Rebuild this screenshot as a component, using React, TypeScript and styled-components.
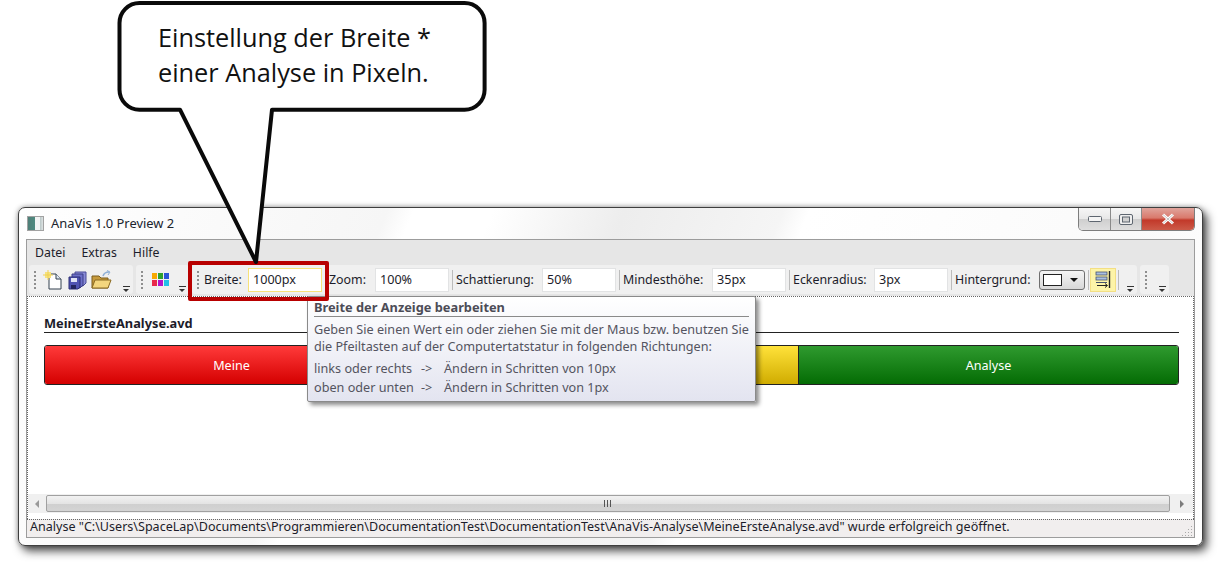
import React from "react";
import styled, { createGlobalStyle } from "styled-components";

const GlobalStyle = createGlobalStyle`
  html, body {
    margin: 0;
    padding: 0;
    background: #ffffff;
  }
  body {
    font-family: "Noto Sans", "Open Sans", sans-serif;
    font-size: 12.6px;
    color: #1c1c2a;
    overflow: hidden;
  }
`;

const Page = styled.div`
  position: relative;
  width: 1221px;
  height: 571px;
  padding: 207px 18px 0;
  box-sizing: border-box;
  overflow: hidden;
`;

const Window = styled.div`
  width: 1185px;
  height: 339px;
  box-sizing: border-box;
  border: 1px solid #3f3f3f;
  border-radius: 7px;
  padding: 0 7px 7px;
  display: flex;
  flex-direction: column;
  box-shadow: 4px 5px 10px rgba(0, 0, 0, 0.7), 0 0 5px rgba(0, 0, 0, 0.35);
  background: linear-gradient(
    112deg,
    #ffffff 0,
    #f6f6f6 28%,
    #ffffff 30%,
    #ffffff 36%,
    #ededed 46%,
    #f5f5f5 58%,
    #ffffff 60%,
    #fafafa 85%,
    #ffffff 100%
  );
`;

const TitleBar = styled.div`
  height: 31px;
  display: flex;
  align-items: flex-start;
  flex-shrink: 0;
`;

const TitleText = styled.span`
  margin: 7px 0 0 7px;
  font-size: 12.9px;
  line-height: 16px;
  color: #20242e;
`;

const AppIcon = styled.div`
  width: 17px;
  height: 15px;
  margin: 8px 0 0 1px;
  border: 1px solid #a2a2a2;
  box-sizing: border-box;
  background: linear-gradient(90deg, #4f7f78 0, #4f8a80 45%, #f2f4f4 50%, #f2f4f4 78%, #b9c6c6 80%, #dfe4e4 100%);
`;

const Controls = styled.div`
  margin-left: auto;
  display: flex;
  height: 22px;
  border: 1px solid #7d7d7d;
  border-top: 0;
  border-radius: 0 0 5px 5px;
  overflow: hidden;
`;

const ControlButton = styled.div<{ $w: number; $close?: boolean }>`
  width: ${(p) => p.$w}px;
  display: flex;
  align-items: center;
  justify-content: center;
  border-left: 1px solid #8a8a8a;
  background: ${(p) =>
    p.$close
      ? "linear-gradient(#e0a49c 0, #d9796c 45%, #c2392a 55%, #cc5a48 100%)"
      : "linear-gradient(#f6f6f6 0, #e8e8e8 48%, #cfcfcf 52%, #dedede 100%)"};
  &:first-child {
    border-left: 0;
  }
`;

const Client = styled.div`
  flex: 1;
  display: flex;
  flex-direction: column;
  border: 1px solid #9c9c9c;
  background: #f0f0f0;
  min-height: 0;
`;

const MenuBar = styled.div`
  height: 25px;
  background: #e6e6e6;
  display: flex;
  align-items: center;
  gap: 16px;
  padding-left: 8px;
  flex-shrink: 0;
`;

const MenuItem = styled.span`
  font-size: 12.3px;
  line-height: 16px;
`;

const ToolRow = styled.div`
  height: 31px;
  background: #e6e6e6;
  display: flex;
  align-items: flex-start;
  padding: 0 0 0 2px;
  gap: 3px;
  flex-shrink: 0;
`;

const Band = styled.div<{ $w: number }>`
  position: relative;
  width: ${(p) => p.$w}px;
  height: 29px;
  background: #f0f0f0;
  border-radius: 3px;
  display: flex;
  align-items: center;
  flex-shrink: 0;
  box-sizing: border-box;
  padding-left: 5px;
`;

const Gripper = styled.div`
  width: 2px;
  height: 18px;
  margin-right: 5px;
  flex-shrink: 0;
  background: repeating-linear-gradient(#8e8e8e 0, #8e8e8e 2px, transparent 2px, transparent 4px);
`;

const OverflowArrow = styled.div`
  position: absolute;
  right: 3px;
  bottom: 2px;
  width: 7px;
  height: 6px;
  border-top: 1px solid #333;
  box-sizing: border-box;
  &::after {
    content: "";
    position: absolute;
    left: 0;
    top: 2px;
    border-left: 3.5px solid transparent;
    border-right: 3.5px solid transparent;
    border-top: 3.5px solid #333;
  }
`;

const ToolIcon = styled.svg`
  width: 22px;
  height: 22px;
  flex-shrink: 0;
  margin: 0 1px;
`;

const FieldLabel = styled.span<{ $w: number }>`
  width: ${(p) => p.$w}px;
  flex-shrink: 0;
  font-size: 12.4px;
  line-height: 16px;
  white-space: nowrap;
`;

const FieldInput = styled.div<{ $active?: boolean }>`
  width: 74px;
  height: 24px;
  box-sizing: border-box;
  background: #fff;
  border: 1px solid ${(p) => (p.$active ? "#f7e27a" : "#e2e3e4")};
  line-height: 22px;
  padding-left: 4px;
  font-size: 12.6px;
  flex-shrink: 0;
`;

const Sep = styled.div<{ $m?: string }>`
  width: 1px;
  height: 20px;
  margin: ${(p) => p.$m ?? "0 3px"};
  background: #bcbcbc;
  flex-shrink: 0;
`;

const Combo = styled.div`
  width: 46px;
  height: 20px;
  box-sizing: border-box;
  border: 1px solid #6f6f6f;
  border-radius: 3px;
  background: linear-gradient(#f4f4f4, #d8d8d8);
  display: flex;
  align-items: center;
  padding-left: 3px;
  gap: 8px;
  flex-shrink: 0;
`;

const Swatch = styled.div`
  width: 19px;
  height: 12px;
  box-sizing: border-box;
  border: 1px solid #222;
  background: #fff;
`;

const ComboArrow = styled.div`
  border-left: 4px solid transparent;
  border-right: 4px solid transparent;
  border-top: 4px solid #111;
`;

const ToggleButton = styled.div`
  width: 26px;
  height: 24px;
  box-sizing: border-box;
  border: 1px solid #f3df84;
  background: #fdf4a8;
  display: flex;
  align-items: center;
  justify-content: center;
  flex-shrink: 0;
`;

const DocArea = styled.div`
  flex: 1;
  min-height: 0;
  background: #fff;
  border: 1px dotted #666;
  border-bottom: 0;
  display: flex;
  flex-direction: column;
  box-sizing: border-box;
`;

const DocBody = styled.div`
  flex: 1;
  min-height: 0;
  padding: 18px 14px 0 16px;
`;

const DocTitle = styled.div`
  font-weight: 700;
  font-size: 12.8px;
  line-height: 16px;
  padding-bottom: 1px;
  border-bottom: 1px solid #222;
`;

const BarRow = styled.div`
  margin-top: 12px;
  display: flex;
  height: 38px;
  border: 1px solid #222;
  border-radius: 3px;
  overflow: hidden;
`;

const Segment = styled.div<{ $from: string; $to: string; $w: number; $text: string }>`
  width: ${(p) => p.$w}px;
  flex-shrink: 0;
  display: flex;
  align-items: center;
  justify-content: center;
  color: ${(p) => p.$text};
  font-size: 12.6px;
  background: linear-gradient(${(p) => p.$from}, ${(p) => p.$to});
  box-sizing: border-box;
  border-right: 1px solid #222;
  &:last-child {
    border-right: 0;
    flex: 1;
  }
`;

const ScrollBar = styled.div`
  height: 19px;
  background: #f0f0f0;
  display: flex;
  align-items: center;
  flex-shrink: 0;
  margin-bottom: 6px;
`;

const ScrollArrow = styled.div<{ $right?: boolean }>`
  width: ${(p) => (p.$right ? 23 : 18)}px;
  flex-shrink: 0;
  display: flex;
  justify-content: center;
  &::after {
    content: "";
    border-top: 4px solid transparent;
    border-bottom: 4px solid transparent;
    ${(p) => (p.$right ? "border-left: 4px solid #7c7c7c;" : "border-right: 4px solid #9a9a9a;")}
  }
`;

const ScrollThumb = styled.div`
  flex: 1;
  height: 17px;
  box-sizing: border-box;
  border: 1px solid #a0a0a0;
  border-radius: 2px;
  background: linear-gradient(#f2f2f2 0, #e4e4e4 50%, #cfcfcf 55%, #d4d4d4 100%);
  display: flex;
  align-items: center;
  justify-content: center;
`;

const ThumbGrip = styled.div`
  width: 8px;
  height: 7px;
  background: repeating-linear-gradient(90deg, #555 0, #555 1px, transparent 1px, transparent 3px);
`;

const StatusBar = styled.div`
  height: 18px;
  flex-shrink: 0;
  position: relative;
  box-sizing: border-box;
  background: #f1eeee;
  border-top: 1px dotted #666;
  padding-left: 3px;
  line-height: 14px;
  font-size: 12.55px;
  white-space: nowrap;
`;

const SizeGrip = styled.svg`
  position: absolute;
  right: 1px;
  bottom: 1px;
  width: 12px;
  height: 12px;
`;

const Tooltip = styled.div`
  position: absolute;
  left: 307px;
  top: 296px;
  width: 449px;
  height: 106px;
  box-sizing: border-box;
  border: 1px solid #8a8a8a;
  border-radius: 2px;
  padding: 2px 6px 0;
  color: #54545f;
  font-size: 12.65px;
  background: linear-gradient(#ffffff, #e3e4f0);
  box-shadow: 3px 3px 4px rgba(0, 0, 0, 0.45);
`;

const TipTitle = styled.div`
  font-weight: 700;
  font-size: 12.8px;
  line-height: 16px;
  padding-bottom: 1px;
  border-bottom: 1px solid #8a8a8a;
  margin-bottom: 4px;
  color: #4c4c56;
`;

const TipParagraph = styled.div`
  line-height: 17px;
  margin-bottom: 4px;
  white-space: nowrap;
`;

const TipRow = styled.div`
  display: grid;
  grid-template-columns: 107px 23px 1fr;
  line-height: 19px;
`;

const Highlight = styled.div`
  position: absolute;
  left: 188px;
  top: 261px;
  width: 141px;
  height: 40px;
  box-sizing: border-box;
  border: 4px solid #b80000;
  border-radius: 2px;
`;

const Callout = styled.div`
  position: absolute;
  left: 117px;
  top: 0;
  width: 372px;
  height: 265px;
`;

const CalloutShape = styled.svg`
  display: block;
  width: 372px;
  height: 265px;
`;

const CalloutText = styled.div`
  position: absolute;
  left: 41px;
  top: 20px;
  font-family: "Open Sans", "Noto Sans", sans-serif;
  font-size: 25.3px;
  line-height: 35px;
  color: #111;
  white-space: nowrap;
`;

const fields = [
  { label: "Zoom:", value: "100%", w: 46 },
  { label: "Schattierung:", value: "50%", w: 86 },
  { label: "Mindesthöhe:", value: "35px", w: 89 },
  { label: "Eckenradius:", value: "3px", w: 81 },
];

const segments = [
  { label: "Meine", w: 374, from: "#ff3a3a", to: "#d40000", text: "#fff" },
  { label: "", w: 380, from: "#ffe23a", to: "#d0ac00", text: "#222" },
  { label: "Analyse", w: 380, from: "#2f9a2f", to: "#046c04", text: "#fff" },
];

function NewIcon() {
  return (
    <ToolIcon viewBox="0 0 22 22">
      <path d="M7 5h7l5 5v10H7z" fill="#fff" stroke="#33404f" strokeWidth="1" />
      <path d="M14 5v5h5" fill="#dfe8f2" stroke="#33404f" strokeWidth="1" />
      <rect x="3" y="3" width="6" height="6" fill="#f6e27e" />
      <path d="M6 1v10M1 6h10" stroke="#f0d050" strokeWidth="1" />
    </ToolIcon>
  );
}

function SaveAllIcon() {
  return (
    <ToolIcon viewBox="0 0 22 22">
      <path d="M9 3h11v11l-3 3H9z" fill="#8a8cd8" stroke="#4a4c96" />
      <path d="M6 5h11v11l-3 3H6z" fill="#6c6fc8" stroke="#3c3e86" />
      <path d="M3 8h11v10l-2 2H3z" fill="#4f53b2" stroke="#2c2e74" />
      <rect x="5" y="9" width="6" height="4" fill="#dfe3f5" />
      <rect x="5" y="16" width="5" height="4" fill="#23255e" />
    </ToolIcon>
  );
}

function OpenIcon() {
  return (
    <ToolIcon viewBox="0 0 22 22">
      <path d="M2 7h7l2 2h7v10H2z" fill="#c69a3c" stroke="#7a5c1c" />
      <path d="M13 7c1-3 3-4 6-4" fill="none" stroke="#8fb0d8" strokeWidth="1.5" />
      <path d="M17 1.5l3 1.5-2 3" fill="none" stroke="#8fb0d8" />
      <path d="M2 19l3-8h16l-3 8z" fill="#f3d67e" stroke="#8a6a22" />
    </ToolIcon>
  );
}

function PaletteIcon() {
  return (
    <ToolIcon viewBox="0 0 22 22">
      <rect x="3" y="4" width="5" height="6" fill="#f7a800" />
      <rect x="9" y="4" width="5" height="6" fill="#2fa12f" />
      <rect x="15" y="4" width="5" height="6" fill="#2a55d8" />
      <rect x="3" y="11" width="5" height="6" fill="#e8284a" />
      <rect x="9" y="11" width="5" height="6" fill="#b312c8" />
      <rect x="15" y="11" width="5" height="6" fill="#20c0e8" />
    </ToolIcon>
  );
}

function AlignIcon() {
  return (
    <svg width="18" height="19" viewBox="0 0 18 19">
      <rect x="2" y="2" width="11" height="3" fill="#a9bfe0" stroke="#46546e" strokeWidth="0.8" />
      <rect x="2" y="7" width="11" height="3" fill="#a9bfe0" stroke="#46546e" strokeWidth="0.8" />
      <path d="M2 12.5h11" stroke="#46546e" />
      <path d="M15.5 1v17" stroke="#222" strokeWidth="1.4" />
      <path d="M3 15.5h10M11 13.5l2.5 2-2.5 2" stroke="#222" fill="none" />
    </svg>
  );
}

export default function App() {
  return (
    <>
      <GlobalStyle />
      <Page>
        <Window>
          <TitleBar>
            <AppIcon />
            <TitleText>AnaVis 1.0 Preview 2</TitleText>
            <Controls>
              <ControlButton $w={31}>
                <svg width="14" height="6" viewBox="0 0 14 6">
                  <rect x="0.5" y="0.5" width="13" height="5" rx="1" fill="#f4f4f4" stroke="#5e6670" />
                </svg>
              </ControlButton>
              <ControlButton $w={30}>
                <svg width="14" height="11" viewBox="0 0 14 11">
                  <rect x="0.5" y="0.5" width="13" height="10" rx="1.5" fill="#eee" stroke="#5e6670" />
                  <rect x="3.5" y="3" width="7" height="5" fill="#d0d0d0" stroke="#5e6670" />
                </svg>
              </ControlButton>
              <ControlButton $w={52} $close>
                <svg width="14" height="12" viewBox="0 0 14 12">
                  <path d="M2 1.5l10 9M12 1.5l-10 9" stroke="#fff" strokeWidth="3" />
                  <path d="M2 1.5l10 9M12 1.5l-10 9" stroke="#8c8c8c" strokeWidth="0.5" />
                </svg>
              </ControlButton>
            </Controls>
          </TitleBar>
          <Client>
            <MenuBar>
              <MenuItem>Datei</MenuItem>
              <MenuItem>Extras</MenuItem>
              <MenuItem>Hilfe</MenuItem>
            </MenuBar>
            <ToolRow>
              <Band $w={104}>
                <Gripper />
                <NewIcon />
                <SaveAllIcon />
                <OpenIcon />
                <OverflowArrow />
              </Band>
              <Band $w={53}>
                <Gripper />
                <PaletteIcon />
                <OverflowArrow />
              </Band>
              <Band $w={945}>
                <Gripper />
                <FieldLabel $w={44}>Breite:</FieldLabel>
                <FieldInput $active>1000px</FieldInput>
                {fields.map((f) => (
                  <React.Fragment key={f.label}>
                    <Sep />
                    <FieldLabel $w={f.w}>{f.label}</FieldLabel>
                    <FieldInput>{f.value}</FieldInput>
                  </React.Fragment>
                ))}
                <Sep />
                <FieldLabel $w={84}>Hintergrund:</FieldLabel>
                <Combo>
                  <Swatch />
                  <ComboArrow />
                </Combo>
                <Sep $m="0 1px 0 3px" />
                <ToggleButton>
                  <AlignIcon />
                </ToggleButton>
                <Sep $m="0 0 0 2px" />
                <OverflowArrow />
              </Band>
              <Band $w={29}>
                <Gripper />
                <OverflowArrow />
              </Band>
            </ToolRow>
            <DocArea>
              <DocBody>
                <DocTitle>MeineErsteAnalyse.avd</DocTitle>
                <BarRow>
                  {segments.map((s) => (
                    <Segment key={s.w + s.label} $from={s.from} $to={s.to} $w={s.w} $text={s.text}>
                      {s.label}
                    </Segment>
                  ))}
                </BarRow>
              </DocBody>
              <ScrollBar>
                <ScrollArrow />
                <ScrollThumb>
                  <ThumbGrip />
                </ScrollThumb>
                <ScrollArrow $right />
              </ScrollBar>
            </DocArea>
            <StatusBar>
              Analyse "C:\Users\SpaceLap\Documents\Programmieren\DocumentationTest\DocumentationTest\AnaVis-Analyse\MeineErsteAnalyse.avd" wurde erfolgreich geöffnet.
              <SizeGrip viewBox="0 0 12 12">
                <path d="M10 2h1v1h-1zM7 5h1v1H7zM10 5h1v1h-1zM4 8h1v1H4zM7 8h1v1H7zM10 8h1v1h-1zM1 11h1v1H1zM4 11h1v1H4zM7 11h1v1H7zM10 11h1v1h-1z" fill="#a9a9a9" />
              </SizeGrip>
            </StatusBar>
          </Client>
        </Window>

        <Tooltip>
          <TipTitle>Breite der Anzeige bearbeiten</TipTitle>
          <TipParagraph>
            Geben Sie einen Wert ein oder ziehen Sie mit der Maus bzw. benutzen Sie
            <br />
            die Pfeiltasten auf der Computertatstatur in folgenden Richtungen:
          </TipParagraph>
          <TipRow>
            <span>links oder rechts</span>
            <span>-&gt;</span>
            <span>Ändern in Schritten von 10px</span>
          </TipRow>
          <TipRow>
            <span>oben oder unten</span>
            <span>-&gt;</span>
            <span>Ändern in Schritten von 1px</span>
          </TipRow>
        </Tooltip>

        <Highlight />

        <Callout>
          <CalloutShape viewBox="0 0 372 265">
            <path
              d="M22.5 3H347.6a20 20 0 0 1 20 20V89.7a20 20 0 0 1 -20 20H155L139 262L63 109.7H22.5a20 20 0 0 1 -20 -20V23a20 20 0 0 1 20 -20z"
              fill="#fff"
              stroke="#0a0a0a"
              strokeWidth="4"
              strokeLinejoin="round"
            />
          </CalloutShape>
          <CalloutText>
            Einstellung der Breite *
            <br />
            einer Analyse in Pixeln.
          </CalloutText>
        </Callout>
      </Page>
    </>
  );
}
